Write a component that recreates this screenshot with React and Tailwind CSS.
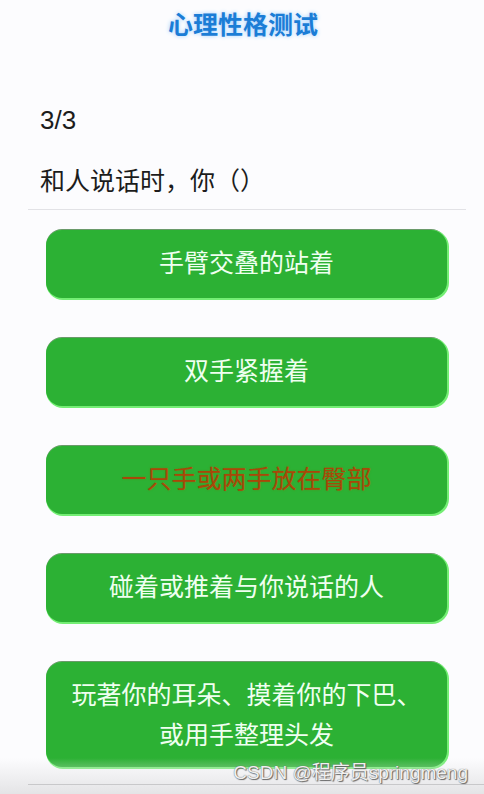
export default function App() {
  const font = { fontFamily: '"Liberation Sans", "Noto Sans CJK SC", sans-serif' };
  const btn =
    "flex items-center justify-center rounded-[16px] bg-[#2cb134] text-[#effff0] text-[25px] text-center shadow-[1px_1px_0_1px_#74ee74,0_-1px_0_0_#6a9a6a]";
  return (
    <div className="relative w-full h-[794px] overflow-hidden bg-[#fcfcfe]" style={font}>
      <div className="pt-[11px] text-center text-[25px] leading-[28px] font-bold text-[#1b7dd6] pl-[2px] [text-shadow:0_0_4px_#9fd0ff]">
        心理性格测试
      </div>
      <div className="mt-[67px] pl-[40px] text-[26px] leading-[28px] text-[#1c1c1c]">3/3</div>
      <div className="mt-[33px] pl-[40px] text-[25px] leading-[28px] text-[#1c1c1c]">和人说话时，你（）</div>
      <div className="mt-[14px] ml-[28px] mr-[18px] h-px bg-[#e2e2e6]" />
      <div className="pt-[20px] ml-[46px] w-[401px] flex flex-col gap-[40px]">
        <div className={btn + " h-[68px]"}>手臂交叠的站着</div>
        <div className={btn + " h-[68px]"}>双手紧握着</div>
        <div className={btn + " h-[68px] !text-[#a84808] [text-shadow:0_0_2px_#5a8a20]"}>一只手或两手放在臀部</div>
        <div className={btn + " h-[68px]"}>碰着或推着与你说话的人</div>
        <div className={btn + " h-[105px] leading-[40px] px-[8px]"}>
          <span>
            玩著你的耳朵、摸着你的下巴、
            <br />
            或用手整理头发
          </span>
        </div>
      </div>
      <div className="absolute left-0 right-0 bottom-0 h-[36px] bg-gradient-to-b from-[#fcfcfe00] to-[#e4e4e6]" />
      <div className="absolute left-[28px] right-0 top-[784px] h-px bg-[#c8c8ca]" />
      <div className="absolute right-[16px] top-[761px] text-[19px] leading-[24px] text-[#f0f0f0] [text-shadow:0_0_1px_#555,1px_1px_1px_#666]">
        CSDN @程序员springmeng
      </div>
    </div>
  );
}
